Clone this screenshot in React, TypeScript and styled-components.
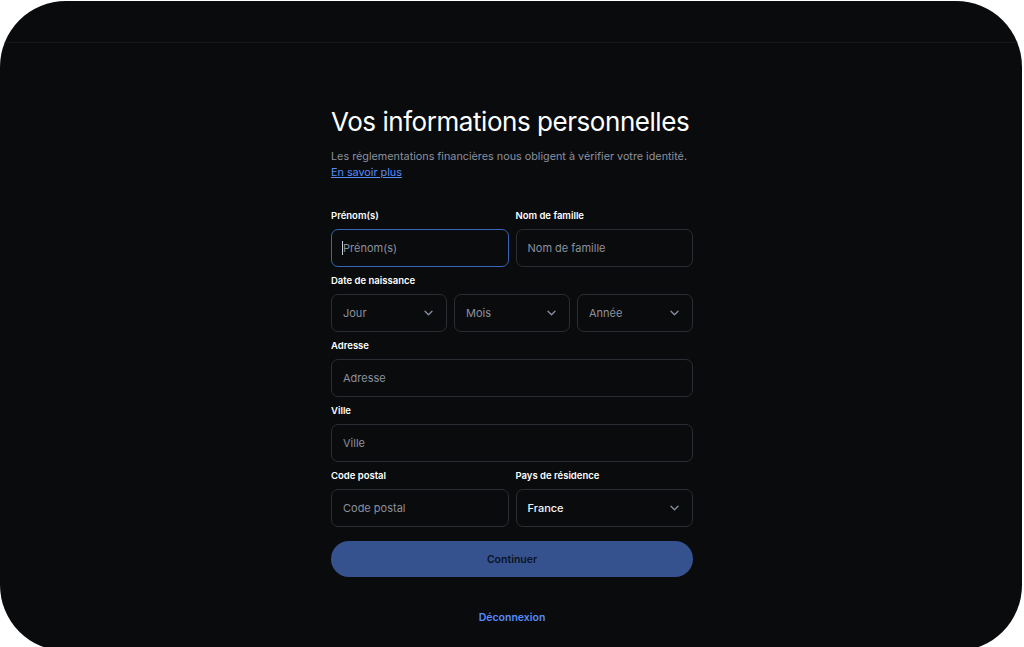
import styled, { createGlobalStyle } from "styled-components";

const GlobalStyle = createGlobalStyle`
  html, body {
    margin: 0;
    background: #ffffff;
    font-family: Inter, "Noto Sans", "Liberation Sans", sans-serif;
  }
`;

const Chevron = () => (
  <svg width="9" height="6" viewBox="0 0 9 6" fill="none">
    <path d="M1 1.2l3.5 3.5 3.5-3.5" stroke="#8a919e" strokeWidth="1.3" strokeLinecap="round" strokeLinejoin="round" />
  </svg>
);

const App = () => {
  return (
    <>
      <GlobalStyle />
      <Panel>
        <Header />
        <Form>
          <Title>Vos informations personnelles</Title>
          <Subtitle>
            Les réglementations financières nous obligent à vérifier votre identité.
          </Subtitle>
          <LearnMore href="#">En savoir plus</LearnMore>

          <Rows>
            <Row $cols={2}>
              <Field>
                <Label>Prénom(s)</Label>
                <InputWrap>
                  <Input $focused placeholder="Prénom(s)" />
                  <Caret />
                </InputWrap>
              </Field>
              <Field>
                <Label>Nom de famille</Label>
                <Input placeholder="Nom de famille" />
              </Field>
            </Row>

            <Field>
              <Label>Date de naissance</Label>
              <Row $cols={3}>
                <Select>
                  <SelectText>Jour</SelectText>
                  <Chevron />
                </Select>
                <Select>
                  <SelectText>Mois</SelectText>
                  <Chevron />
                </Select>
                <Select>
                  <SelectText>Année</SelectText>
                  <Chevron />
                </Select>
              </Row>
            </Field>

            <Field>
              <Label>Adresse</Label>
              <Input placeholder="Adresse" />
            </Field>

            <Field>
              <Label>Ville</Label>
              <Input placeholder="Ville" />
            </Field>

            <Row $cols={2}>
              <Field>
                <Label>Code postal</Label>
                <Input placeholder="Code postal" />
              </Field>
              <Field>
                <Label>Pays de résidence</Label>
                <Select>
                  <SelectText $filled>France</SelectText>
                  <Chevron />
                </Select>
              </Field>
            </Row>
          </Rows>

          <Button>Continuer</Button>
          <Logout href="#">Déconnexion</Logout>
        </Form>
      </Panel>
    </>
  );
};

const Panel = styled.div`
  box-sizing: border-box;
  width: 1022px;
  height: 650px;
  margin-top: 1px;
  padding-left: 2px;
  background: #0a0b0d;
  border-radius: 66px;
  overflow: hidden;
  display: flex;
  flex-direction: column;
`;

const Header = styled.div`
  height: 41px;
  flex-shrink: 0;
  border-bottom: 1px solid #16181c;
`;

const Form = styled.div`
  width: 362px;
  margin: 0 auto;
  padding-top: 62px;
  display: flex;
  flex-direction: column;
`;

const Title = styled.h1`
  margin: 0;
  font-size: 26px;
  line-height: 34px;
  font-weight: 400;
  letter-spacing: -0.45px;
  color: #ffffff;
`;

const Subtitle = styled.p`
  margin: 10px 0 0;
  font-size: 10.8px;
  line-height: 16px;
  color: #8a919e;
`;

const LearnMore = styled.a`
  align-self: flex-start;
  font-size: 10.8px;
  line-height: 16px;
  color: #578bfa;
  text-decoration: underline;
`;

const Rows = styled.div`
  margin-top: 28px;
  display: flex;
  flex-direction: column;
  gap: 7px;
`;

const Row = styled.div<{ $cols: number }>`
  display: grid;
  grid-template-columns: repeat(${(p) => p.$cols}, 1fr);
  gap: 7px;
`;

const Field = styled.div`
  display: flex;
  flex-direction: column;
`;

const Label = styled.label`
  font-size: 9.5px;
  line-height: 14px;
  font-weight: 600;
  color: #ffffff;
  margin-bottom: 6px;
`;

const InputWrap = styled.div`
  position: relative;
  display: flex;
  flex-direction: column;
`;

const Input = styled.input<{ $focused?: boolean }>`
  box-sizing: border-box;
  height: 38px;
  width: 100%;
  padding: 0 11px;
  background: transparent;
  border: ${(p) => (p.$focused ? "1.5px solid #3c64b4" : "1px solid #2a2d33")};
  border-radius: 7px;
  font-family: inherit;
  font-size: 11px;
  color: #ffffff;
  outline: none;
  &::placeholder {
    color: #8a919e;
  }
`;

const Caret = styled.span`
  position: absolute;
  left: 11px;
  top: 12px;
  width: 1px;
  height: 14px;
  background: #c7cbd3;
`;

const Select = styled.div`
  box-sizing: border-box;
  height: 38px;
  padding: 0 13px 0 11px;
  border: 1px solid #2a2d33;
  border-radius: 7px;
  display: flex;
  align-items: center;
  justify-content: space-between;
`;

const SelectText = styled.span<{ $filled?: boolean }>`
  font-size: 11px;
  font-weight: ${(p) => (p.$filled ? 500 : 400)};
  color: ${(p) => (p.$filled ? "#f3f4f6" : "#8a919e")};
`;

const Button = styled.button`
  margin-top: 14px;
  height: 36px;
  border: none;
  border-radius: 18px;
  background: #35528e;
  font-family: inherit;
  font-size: 10.5px;
  font-weight: 600;
  color: #0b1325;
`;

const Logout = styled.a`
  margin-top: 33px;
  align-self: center;
  font-size: 10.5px;
  line-height: 16px;
  font-weight: 600;
  color: #578bfa;
  text-decoration: none;
`;

export default App;
